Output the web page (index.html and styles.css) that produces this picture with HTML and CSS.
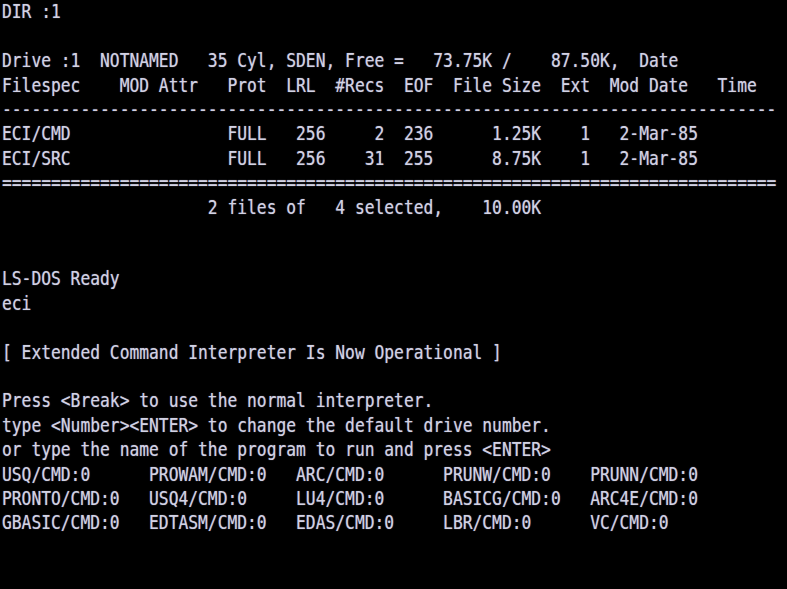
FILE: index.html
```html
<!DOCTYPE html>
<html>
<head>
<meta charset="utf-8">
<link rel="stylesheet" href="styles.css">
</head>
<body>
<div class="screen">
<pre class="term">DIR :1

Drive :1  NOTNAMED   35 Cyl, SDEN, Free =   73.75K /    87.50K,  Date
Filespec    MOD Attr   Prot  LRL  #Recs  EOF  File Size  Ext  Mod Date   Time
-------------------------------------------------------------------------------
ECI/CMD                FULL   256     2  236      1.25K    1   2-Mar-85
ECI/SRC                FULL   256    31  255      8.75K    1   2-Mar-85
===============================================================================
                     2 files of   4 selected,    10.00K


LS-DOS Ready
eci

[ Extended Command Interpreter Is Now Operational ]

Press &lt;Break&gt; to use the normal interpreter.
type &lt;Number&gt;&lt;ENTER&gt; to change the default drive number.
or type the name of the program to run and press &lt;ENTER&gt;
USQ/CMD:0      PROWAM/CMD:0   ARC/CMD:0      PRUNW/CMD:0    PRUNN/CMD:0
PRONTO/CMD:0   USQ4/CMD:0     LU4/CMD:0      BASICG/CMD:0   ARC4E/CMD:0
GBASIC/CMD:0   EDTASM/CMD:0   EDAS/CMD:0     LBR/CMD:0      VC/CMD:0</pre>
</div>
</body>
</html>
```
FILE: styles.css
```css
html, body {
  margin: 0;
  padding: 0;
  background: #000;
}
.screen {
  width: 787px;
  height: 589px;
  background: #000;
  overflow: hidden;
}
.term {
  margin: 0;
  padding: 0 0 0 2px;
  font-family: "DejaVu Sans Mono", "Liberation Mono", monospace;
  font-size: 16.3px;
  line-height: 19.93px;
  color: #d2d2e4;
  white-space: pre;
  transform: scaleY(1.22);
  transform-origin: 0 0;
  text-shadow: 0 0 1px rgba(200, 200, 235, 0.6);
}
```
